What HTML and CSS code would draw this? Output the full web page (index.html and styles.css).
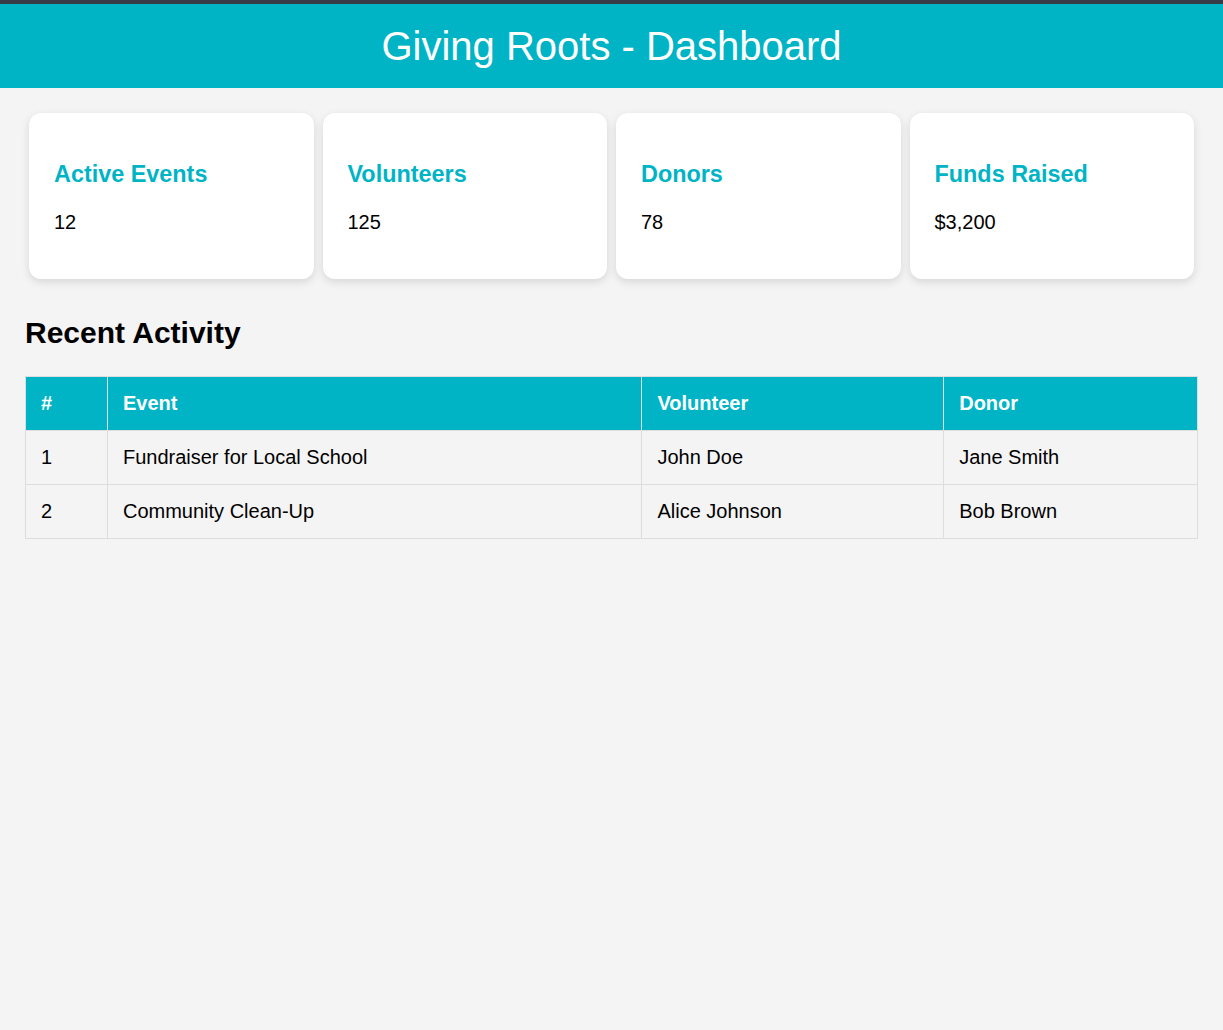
FILE: index.html
```html
<!DOCTYPE html>
<html lang="en">
<head>
<meta charset="utf-8">
<title>Giving Roots - Dashboard</title>
<link rel="stylesheet" href="styles.css">
</head>
<body>
<div class="topstrip"></div>
<header class="header">
  <h1>Giving Roots - Dashboard</h1>
</header>
<main class="container">
  <section class="cards">
    <div class="card"><h3>Active Events</h3><p>12</p></div>
    <div class="card"><h3>Volunteers</h3><p>125</p></div>
    <div class="card"><h3>Donors</h3><p>78</p></div>
    <div class="card"><h3>Funds Raised</h3><p>$3,200</p></div>
  </section>
  <h2 class="section-title">Recent Activity</h2>
  <table class="activity">
    <colgroup>
      <col class="c-num"><col class="c-event"><col class="c-vol"><col class="c-donor">
    </colgroup>
    <thead>
      <tr><th>#</th><th>Event</th><th>Volunteer</th><th>Donor</th></tr>
    </thead>
    <tbody>
      <tr><td>1</td><td>Fundraiser for Local School</td><td>John Doe</td><td>Jane Smith</td></tr>
      <tr><td>2</td><td>Community Clean-Up</td><td>Alice Johnson</td><td>Bob Brown</td></tr>
    </tbody>
  </table>
</main>
</body>
</html>
```
FILE: styles.css
```css
html, body {
  margin: 0;
  padding: 0;
}
body {
  background: #f4f4f4;
  font-family: "Liberation Sans", Arial, sans-serif;
  font-size: 20px;
  color: #000;
}
.topstrip {
  height: 4px;
  background: #383c48;
}
.header {
  background: #00b4c6;
  color: #fff;
  text-align: center;
  padding: 19px 0;
}
.header h1 {
  margin: 0;
  font-size: 40px;
  font-weight: normal;
  line-height: 46px;
}
.container {
  padding: 25px;
}
.cards {
  display: flex;
  gap: 9px;
  padding: 0 4px;
}
.card {
  flex: 1;
  background: #fff;
  border-radius: 12px;
  padding: 0 25px;
  box-shadow: 0 3px 8px rgba(0, 0, 0, 0.12);
  overflow: hidden;
}
.card h3 {
  color: #00b4c6;
  font-size: 23.4px;
  margin: 48px 0 23.4px;
}
.card p {
  margin: 0 0 45px;
}
.section-title {
  font-size: 30px;
  margin: 37px 0 26px;
}
.activity {
  width: 100%;
  border-collapse: collapse;
}
.c-num { width: 82px; }
.c-event { width: 535px; }
.c-vol { width: 302px; }
.c-donor { width: 254px; }
.activity th,
.activity td {
  border: 1px solid #ddd;
  padding: 15px;
  text-align: left;
}
.activity th {
  background: #00b4c6;
  color: #fff;
  font-weight: bold;
}
```
